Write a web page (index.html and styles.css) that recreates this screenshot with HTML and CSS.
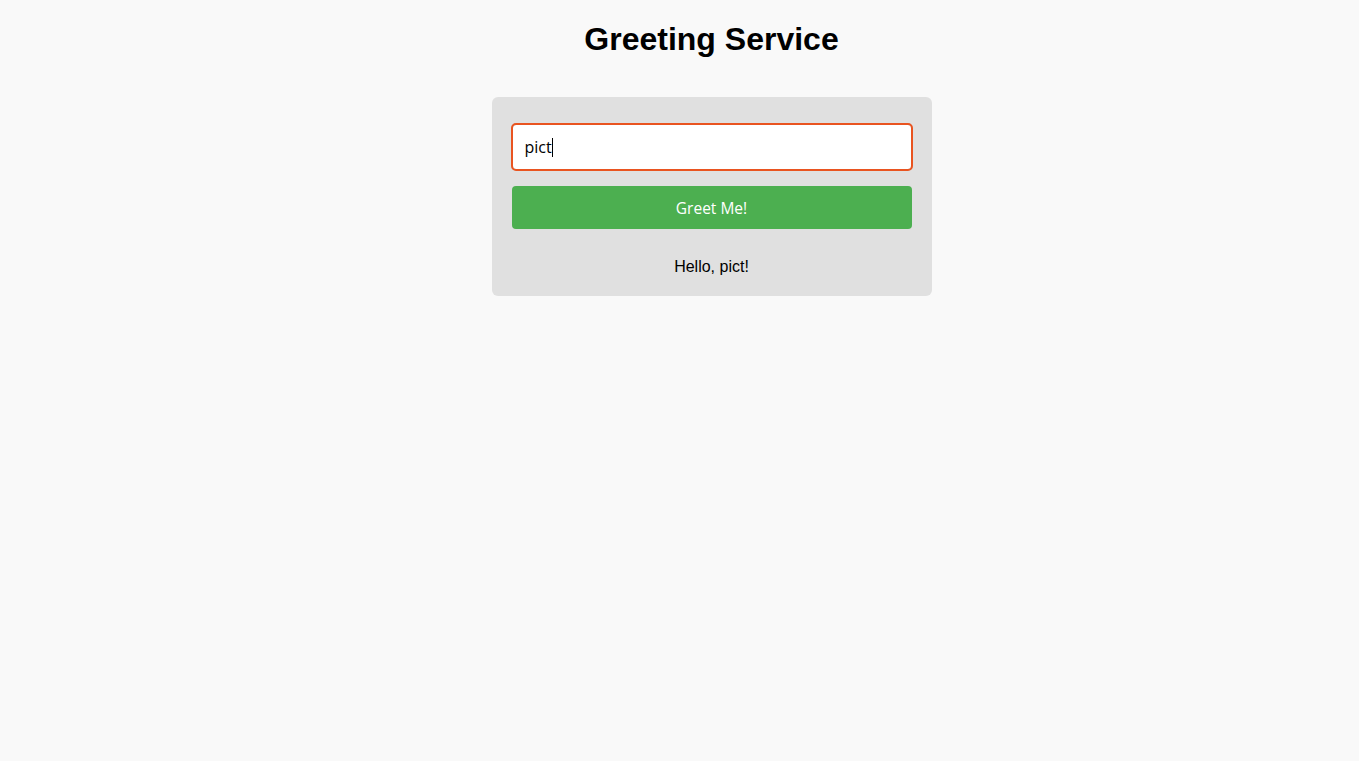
FILE: index.html
```html
<!DOCTYPE html>
<html lang="en">
<head>
<meta charset="utf-8">
<title>Greeting Service</title>
<link rel="stylesheet" href="styles.css">
</head>
<body>
<main class="page">
  <h1 class="title">Greeting Service</h1>
  <section class="card">
    <div class="field">pict<span class="caret"></span></div>
    <button class="greet-btn" type="button">Greet Me!</button>
    <p class="result">Hello, pict!</p>
  </section>
</main>
</body>
</html>
```

FILE: styles.css
```css
html, body {
  margin: 0;
  padding: 0;
  background: #f9f9f9;
}

body {
  font-family: "Liberation Sans", Arial, sans-serif;
  color: #000;
}

.page {
  padding: 21px 0 0 64px;
  display: flex;
  flex-direction: column;
  align-items: center;
}

.title {
  margin: 0;
  font-size: 32px;
  line-height: 37px;
  font-weight: 700;
  text-align: center;
}

.card {
  box-sizing: border-box;
  width: 440px;
  margin-top: 39px;
  padding: 27px 20px 20px;
  background: #e0e0e0;
  border-radius: 6px;
  display: flex;
  flex-direction: column;
}

.field {
  box-sizing: border-box;
  height: 46px;
  padding: 0 12px;
  background: #fff;
  border: 1px solid #ccc;
  border-radius: 4px;
  outline: 2px solid #e95420;
  outline-offset: -1px;
  display: flex;
  align-items: center;
  font-family: "Open Sans", "Noto Sans", sans-serif;
  font-size: 16px;
  color: #000;
}

.caret {
  display: inline-block;
  width: 1px;
  height: 19px;
  background: #000;
}

.greet-btn {
  box-sizing: border-box;
  margin-top: 16px;
  height: 43px;
  border: none;
  border-radius: 4px;
  background: #4caf50;
  color: #fff;
  font-family: "Open Sans", "Noto Sans", sans-serif;
  font-size: 15.5px;
  padding: 0;
}

.result {
  margin: 29px 0 0;
  font-size: 16px;
  line-height: 18px;
  text-align: center;
}
```
